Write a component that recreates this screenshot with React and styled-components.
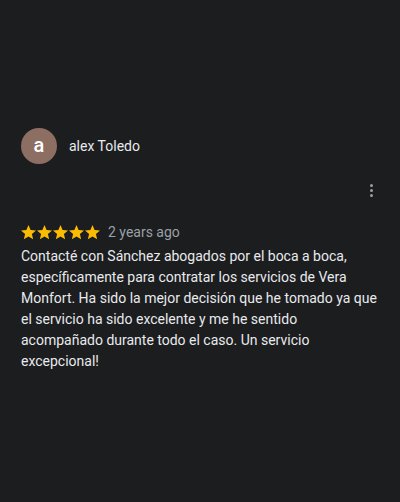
import styled, { createGlobalStyle } from 'styled-components'

const Global = createGlobalStyle`
    html, body {
        margin: 0;
        background: #1c1d1f;
    }
    body {
        font-family: Roboto, "Liberation Sans", sans-serif;
    }
`

const Page = styled.div`
    width: 400px;
    height: 502px;
    background: #1c1d1f;
    box-sizing: border-box;
    padding: 128px 21px 0 21px;
    display: flex;
    flex-direction: column;
`

const Header = styled.div`
    display: flex;
    align-items: center;
    gap: 12px;
`

const Avatar = styled.div`
    width: 36px;
    height: 36px;
    border-radius: 50%;
    background: #8d6e63;
    color: #fff;
    display: flex;
    align-items: center;
    justify-content: center;
    font-size: 20px;
    font-weight: 500;
    padding-bottom: 2px;
    box-sizing: border-box;
`

const Name = styled.span`
    color: #e8eaed;
    font-size: 14px;
`

const MenuRow = styled.div`
    display: flex;
    justify-content: flex-end;
    margin-top: 20px;
    padding-right: 6px;
`

const Dots = styled.div`
    display: flex;
    flex-direction: column;
    gap: 2px;

    span {
        width: 3px;
        height: 3px;
        border-radius: 50%;
        background: #9aa0a6;
    }
`

const RatingRow = styled.div`
    display: flex;
    align-items: center;
    margin-top: 27px;
    gap: 8px;
`

const Stars = styled.div`
    display: flex;
    gap: 1px;
`

const When = styled.span`
    color: #9aa0a6;
    font-size: 14px;
`

const Body = styled.p`
    margin: 6px 0 0 0;
    color: #e8eaed;
    font-size: 14px;
    line-height: 21px;
`

function Star() {
    return (
        <svg width="15" height="15" viewBox="2 2 20 20">
            <path fill="#fbbc04" d="M12 17.27 18.18 21l-1.64-7.03L22 9.24l-7.19-.61L12 2 9.19 8.63 2 9.24l5.46 4.73L5.82 21z" />
        </svg>
    )
}

export default function App() {
    return (
        <>
            <Global />
            <Page>
                <Header>
                    <Avatar>a</Avatar>
                    <Name>alex Toledo</Name>
                </Header>
                <MenuRow>
                    <Dots><span /><span /><span /></Dots>
                </MenuRow>
                <RatingRow>
                    <Stars>
                        {[0, 1, 2, 3, 4].map(i => <Star key={i} />)}
                    </Stars>
                    <When>2 years ago</When>
                </RatingRow>
                <Body>
                    Contacté con Sánchez abogados por el boca a boca, específicamente para contratar los servicios de Vera Monfort. Ha sido la mejor decisión que he tomado ya que el servicio ha sido excelente y me he sentido acompañado durante todo el caso. Un servicio excepcional!
                </Body>
            </Page>
        </>
    )
}
